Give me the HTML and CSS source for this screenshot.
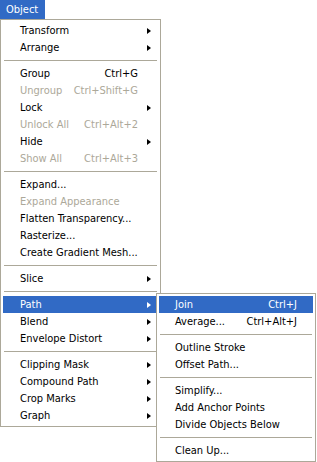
FILE: index.html
```html
<!DOCTYPE html>
<html>
<head>
  <link rel="stylesheet" href="styles.css">
</head>
<body>
  <div class="menubar">
    <span class="menubar-item open">Object</span>
  </div>

  <ul class="menu main-menu">
    <li class="item"><span class="label">Transform</span><span class="arrow"></span></li>
    <li class="item"><span class="label">Arrange</span><span class="arrow"></span></li>
    <li class="sep"></li>
    <li class="item"><span class="label">Group</span><span class="key">Ctrl+G</span><span class="no-arrow"></span></li>
    <li class="item disabled"><span class="label">Ungroup</span><span class="key">Ctrl+Shift+G</span><span class="no-arrow"></span></li>
    <li class="item"><span class="label">Lock</span><span class="arrow"></span></li>
    <li class="item disabled"><span class="label">Unlock All</span><span class="key">Ctrl+Alt+2</span><span class="no-arrow"></span></li>
    <li class="item"><span class="label">Hide</span><span class="arrow"></span></li>
    <li class="item disabled"><span class="label">Show All</span><span class="key">Ctrl+Alt+3</span><span class="no-arrow"></span></li>
    <li class="sep"></li>
    <li class="item"><span class="label">Expand...</span></li>
    <li class="item disabled"><span class="label">Expand Appearance</span></li>
    <li class="item"><span class="label">Flatten Transparency...</span></li>
    <li class="item"><span class="label">Rasterize...</span></li>
    <li class="item"><span class="label">Create Gradient Mesh...</span></li>
    <li class="sep"></li>
    <li class="item"><span class="label">Slice</span><span class="arrow"></span></li>
    <li class="sep"></li>
    <li class="item active has-sub">
      <span class="label">Path</span><span class="arrow"></span>
      <!-- open submenu -->
      <ul class="menu sub-menu">
        <li class="item active"><span class="label">Join</span><span class="key">Ctrl+J</span></li>
        <li class="item"><span class="label">Average...</span><span class="key">Ctrl+Alt+J</span></li>
        <li class="sep"></li>
        <li class="item"><span class="label">Outline Stroke</span></li>
        <li class="item"><span class="label">Offset Path...</span></li>
        <li class="sep"></li>
        <li class="item"><span class="label">Simplify...</span></li>
        <li class="item"><span class="label">Add Anchor Points</span></li>
        <li class="item"><span class="label">Divide Objects Below</span></li>
        <li class="sep"></li>
        <li class="item"><span class="label">Clean Up...</span></li>
      </ul>
    </li>
    <li class="item"><span class="label">Blend</span><span class="arrow"></span></li>
    <li class="item"><span class="label">Envelope Distort</span><span class="arrow"></span></li>
    <li class="sep"></li>
    <li class="item"><span class="label">Clipping Mask</span><span class="arrow"></span></li>
    <li class="item"><span class="label">Compound Path</span><span class="arrow"></span></li>
    <li class="item"><span class="label">Crop Marks</span><span class="arrow"></span></li>
    <li class="item"><span class="label">Graph</span><span class="arrow"></span></li>
  </ul>
</body>
</html>
```

FILE: styles.css
```css
html,
body {
  height: 100%;
}

body {
  margin: 0;
  min-height: 462px;
  background: #fff;
  font-family: Tahoma, "DejaVu Sans Condensed", "Liberation Sans", sans-serif;
  font-size: 11px;
  color: #000;
}

.menubar {
  display: flex;
  height: 19px;
}

.menubar-item {
  display: flex;
  align-items: center;
  width: 39px;
  padding-left: 6px;
  color: #000;
}

.menubar-item.open {
  background: #316ac5;
  color: #fff;
}

.menu {
  list-style: none;
  margin: 0;
  padding: 2px;
  background: #fff;
  border: 1px solid #aca899;
}

.main-menu {
  width: 155px;
}

.item {
  position: relative;
  display: flex;
  align-items: center;
  height: 17px;
  padding: 0 7px 0 17px;
  white-space: nowrap;
}

.item .label {
  flex: 1;
}

.item .key {
  margin-right: 9px;
}

.arrow,
.no-arrow {
  width: 4px;
  height: 7px;
}

.arrow {
  border-left: 4px solid #000;
  border-top: 3.5px solid transparent;
  border-bottom: 3.5px solid transparent;
  width: 0;
  height: 0;
  box-sizing: border-box;
}

.item.disabled {
  color: #aca899;
}

.item.active {
  background: #316ac5;
  color: #fff;
}

.item.active > .arrow {
  border-left-color: #fff;
}

.sep {
  height: 9px;
  display: flex;
  align-items: center;
  padding: 0 1px;
}

.sep::before {
  content: '';
  flex: 1;
  height: 1px;
  background: #aca899;
}

/* submenu sits over the main menu's right edge */
.sub-menu {
  position: absolute;
  left: calc(100% - 2px);
  top: -3px;
  width: 154px;
  color: #000;
  z-index: 2;
}

.sub-menu .item {
  padding: 0 16px 0 16px;
}

.sub-menu .item .key {
  margin-right: 0;
}
```
